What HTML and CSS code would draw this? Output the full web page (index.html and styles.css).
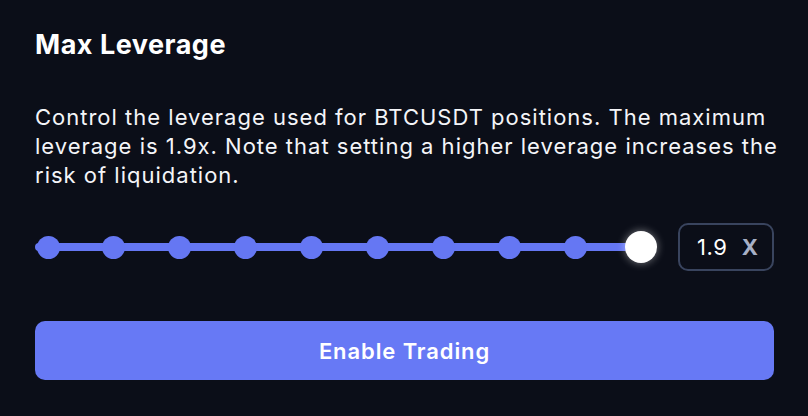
FILE: index.html
```html
<!DOCTYPE html>
<html lang="en">

<head>
    <meta charset="UTF-8">
    <meta name="viewport" content="width=device-width, initial-scale=1.0">
    <title>Max Leverage</title>
    <link rel="stylesheet" href="styles.css">
</head>

<body>
    <div class="panel">
        <h1 class="title">Max Leverage</h1>
        <p class="desc">Control the leverage used for BTCUSDT positions. The maximum leverage is 1.9x. Note that setting a higher leverage increases the risk of liquidation.</p>

        <div class="slider-row">
            <div class="slider">
                <div class="stop"><span class="dot"></span></div>
                <div class="stop"><span class="dot"></span></div>
                <div class="stop"><span class="dot"></span></div>
                <div class="stop"><span class="dot"></span></div>
                <div class="stop"><span class="dot"></span></div>
                <div class="stop"><span class="dot"></span></div>
                <div class="stop"><span class="dot"></span></div>
                <div class="stop"><span class="dot"></span></div>
                <div class="stop"><span class="dot"></span></div>
                <div class="stop"><span class="thumb"></span></div>
            </div>
            <div class="value-box">
                <span class="value">1.9</span>
                <span class="unit">X</span>
            </div>
        </div>

        <button class="enable-btn">Enable Trading</button>
    </div>
</body>

</html>
```

FILE: styles.css
```css
body {
    margin: 0;
    background-color: #0b0e18;
    font-family: "Inter", "Noto Sans", sans-serif;
    color: #ffffff;
}

.panel {
    padding: 28px 34px 0 35px;
}

.title {
    margin: 0;
    font-size: 27px;
    font-weight: 700;
    line-height: 34px;
    letter-spacing: 0.5px;
}

.desc {
    margin: 41px -12px 0 0;
    font-size: 22px;
    line-height: 29px;
    letter-spacing: 1px;
    color: #f4f5f8;
}

.slider-row {
    display: flex;
    align-items: center;
    margin-top: 33px;
}

.slider {
    position: relative;
    flex: 1;
    height: 48px;
    display: flex;
    align-items: center;
    justify-content: space-between;
    padding: 0 16px 0 13px;
    margin-right: 21px;
}

.slider::before {
    content: "";
    position: absolute;
    left: 0;
    right: 16px;
    top: 20px;
    height: 8px;
    border-radius: 4px;
    background-color: #6577f3;
}

.stop {
    position: relative;
    width: 0;
    display: flex;
    justify-content: center;
    align-items: center;
}

.dot {
    flex: none;
    width: 23px;
    height: 23px;
    border-radius: 50%;
    background-color: #6577f3;
}

.thumb {
    flex: none;
    width: 32px;
    height: 32px;
    border-radius: 50%;
    background-color: #ffffff;
    box-shadow: 0 0 8px rgba(255, 255, 255, 0.45);
}

.value-box {
    box-sizing: border-box;
    width: 96px;
    height: 48px;
    border: 2px solid #39445e;
    border-radius: 10px;
    display: flex;
    align-items: center;
    justify-content: space-between;
    padding: 0 14px 0 17px;
}

.value {
    font-size: 22px;
    letter-spacing: 0.6px;
    color: #ffffff;
}

.unit {
    font-size: 22px;
    font-weight: 700;
    color: #a7b0c6;
}

.enable-btn {
    display: block;
    width: 100%;
    height: 59px;
    margin-top: 50px;
    border: none;
    border-radius: 10px;
    background-color: #6779f5;
    color: #ffffff;
    font-family: inherit;
    font-size: 22px;
    font-weight: 600;
    letter-spacing: 0.9px;
    cursor: pointer;
}
```
